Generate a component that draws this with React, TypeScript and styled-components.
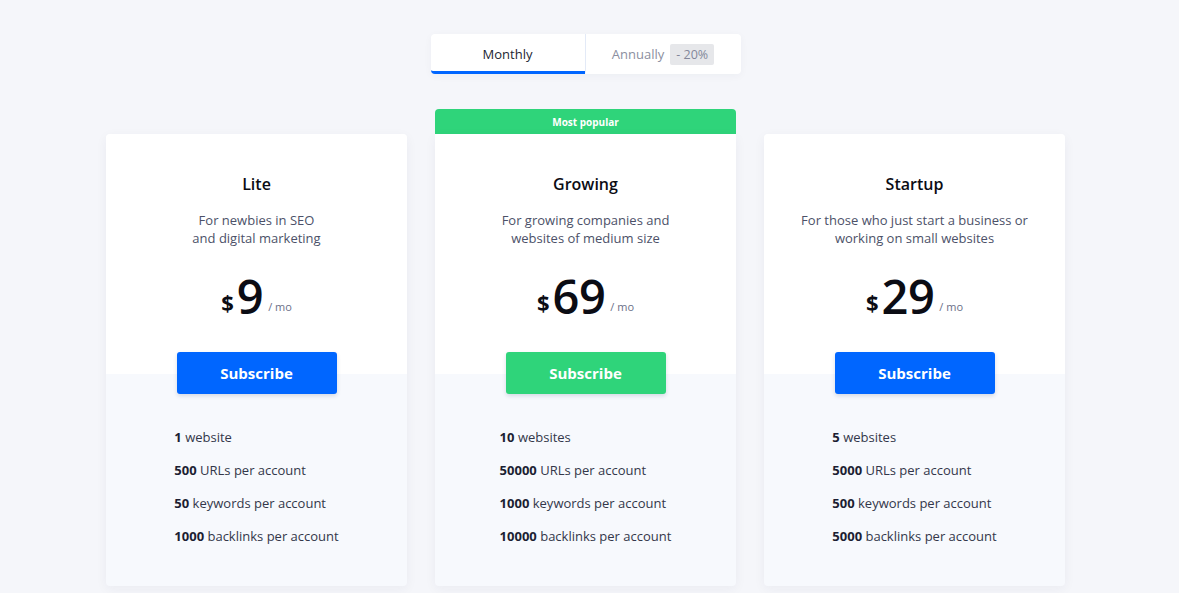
import React, { useState } from 'react'
import styled, { createGlobalStyle } from 'styled-components';

const GlobalStyle = createGlobalStyle`
  body {
    margin: 0;
    background: #f5f6fa;
    font-family: "Open Sans", "Liberation Sans", sans-serif;
    color: #1c1f33;
  }
`;

const Page = styled.div`
  display: flex;
  flex-direction: column;
  align-items: center;
  padding: 34px 8px 0 0;
  min-height: 593px;
  box-sizing: border-box;
`;

const Toggle = styled.div`
  display: flex;
  background: #fff;
  border-radius: 4px;
  box-shadow: 0 2px 8px rgba(30, 40, 80, 0.04);
`;

const Tab = styled.button<{ $active?: boolean; $w: number }>`
  width: ${p => p.$w}px;
  height: 40px;
  display: flex;
  align-items: center;
  justify-content: center;
  gap: 6px;
  border: none;
  background: transparent;
  font-family: inherit;
  font-size: 13px;
  color: ${p => (p.$active ? '#1c1f33' : '#8b8fa0')};
  border-bottom: 3px solid ${p => (p.$active ? '#0066ff' : 'transparent')};
  border-radius: ${p => (p.$active ? '4px 0 0 4px' : '0 4px 4px 0')};
  padding: 3px 0 0;
  cursor: pointer;

  & + & {
    border-left: 1px solid #e3eaf7;
  }
`;

const Badge = styled.span`
  background: #e6e7ea;
  color: #83879a;
  font-size: 12.5px;
  padding: 2px 6px;
  border-radius: 2px;
`;

const Cards = styled.div`
  display: flex;
  align-items: flex-end;
  gap: 28px;
  margin-top: 35px;
`;

const Column = styled.div`
  display: flex;
  flex-direction: column;
  width: 301px;
`;

const Ribbon = styled.div`
  height: 25px;
  background: #2fd47a;
  color: #fff;
  font-size: 10px;
  font-weight: 700;
  display: flex;
  align-items: center;
  justify-content: center;
  border-radius: 4px 4px 0 0;
`;

const Card = styled.div<{ $popular?: boolean }>`
  display: flex;
  flex-direction: column;
  align-items: center;
  background: #f7f9fd;
  border-radius: ${p => (p.$popular ? '0 0 4px 4px' : '4px')};
  box-shadow: 0 3px 12px rgba(30, 40, 80, 0.05);
  overflow: hidden;
  padding-bottom: 40px;
`;

const Top = styled.div`
  align-self: stretch;
  background: #fff;
  display: flex;
  flex-direction: column;
  align-items: center;
  padding: 38px 0 50px;
`;

const Title = styled.h3`
  margin: 0;
  font-size: 16px;
  line-height: 24px;
  font-weight: 600;
  color: #0b0c14;
`;

const Desc = styled.p`
  margin: 15px 0 0;
  font-size: 13px;
  line-height: 18px;
  color: #4c5168;
  text-align: center;
  white-space: pre-line;
`;

const Price = styled.div`
  display: flex;
  align-items: baseline;
  margin-top: 21px;
  height: 56px;
`;

const Currency = styled.span`
  font-size: 22px;
  font-weight: 700;
  color: #0b0c14;
  margin-right: 3px;
  transform: translateY(-3px);
`;

const Amount = styled.span`
  font-size: 47px;
  line-height: 56px;
  font-weight: 600;
  color: #0b0c14;
  letter-spacing: -0.5px;
`;

const Per = styled.span`
  font-size: 11px;
  color: #6b7088;
  margin-left: 5px;
  transform: translateY(-3px);
`;

const Subscribe = styled.button<{ $color: string }>`
  width: 160px;
  height: 42px;
  margin-top: -22px;
  border: none;
  border-radius: 3px;
  background: ${p => p.$color};
  color: #fff;
  font-family: inherit;
  font-size: 15px;
  font-weight: 700;
  box-shadow: 0 2px 4px rgba(20, 40, 90, 0.15);
  cursor: pointer;
`;

const Features = styled.ul`
  list-style: none;
  margin: 33px 0 0;
  padding: 0;
  display: flex;
  flex-direction: column;
  gap: 13px;
`;

const Feature = styled.li`
  font-size: 13px;
  line-height: 20px;
  color: #33374a;

  & b {
    font-weight: 700;
    color: #1c1f33;
  }
`;

interface Plan {
  name: string;
  desc: string;
  price: number;
  popular?: boolean;
  features: [string, string][];
}

const plans: Plan[] = [
  {
    name: 'Lite',
    desc: 'For newbies in SEO\nand digital marketing',
    price: 9,
    features: [
      ['1', 'website'],
      ['500', 'URLs per account'],
      ['50', 'keywords per account'],
      ['1000', 'backlinks per account'],
    ],
  },
  {
    name: 'Growing',
    desc: 'For growing companies and\nwebsites of medium size',
    price: 69,
    popular: true,
    features: [
      ['10', 'websites'],
      ['50000', 'URLs per account'],
      ['1000', 'keywords per account'],
      ['10000', 'backlinks per account'],
    ],
  },
  {
    name: 'Startup',
    desc: 'For those who just start a business or\nworking on small websites',
    price: 29,
    features: [
      ['5', 'websites'],
      ['5000', 'URLs per account'],
      ['500', 'keywords per account'],
      ['5000', 'backlinks per account'],
    ],
  },
];

const PlanCard: React.FC<{ plan: Plan }> = ({ plan }) => (
  <Column>
    {plan.popular && <Ribbon>Most popular</Ribbon>}
    <Card $popular={plan.popular}>
      <Top>
        <Title>{plan.name}</Title>
        <Desc>{plan.desc}</Desc>
        <Price>
          <Currency>$</Currency>
          <Amount>{plan.price}</Amount>
          <Per>/ mo</Per>
        </Price>
      </Top>
      <Subscribe $color={plan.popular ? '#2fd47a' : '#0066ff'}>Subscribe</Subscribe>
      <Features>
        {plan.features.map(([num, text]) => (
          <Feature key={text}>
            <b>{num}</b> {text}
          </Feature>
        ))}
      </Features>
    </Card>
  </Column>
);

export default function App() {
  const [period, setPeriod] = useState<'monthly' | 'annually'>('monthly');

  return (
    <>
      <GlobalStyle />
      <Page>
        <Toggle>
          <Tab $w={154} $active={period === 'monthly'} onClick={() => setPeriod('monthly')}>
            Monthly
          </Tab>
          <Tab $w={156} $active={period === 'annually'} onClick={() => setPeriod('annually')}>
            Annually <Badge>- 20%</Badge>
          </Tab>
        </Toggle>
        <Cards>
          {plans.map(p => (
            <PlanCard key={p.name} plan={p} />
          ))}
        </Cards>
      </Page>
    </>
  );
}
